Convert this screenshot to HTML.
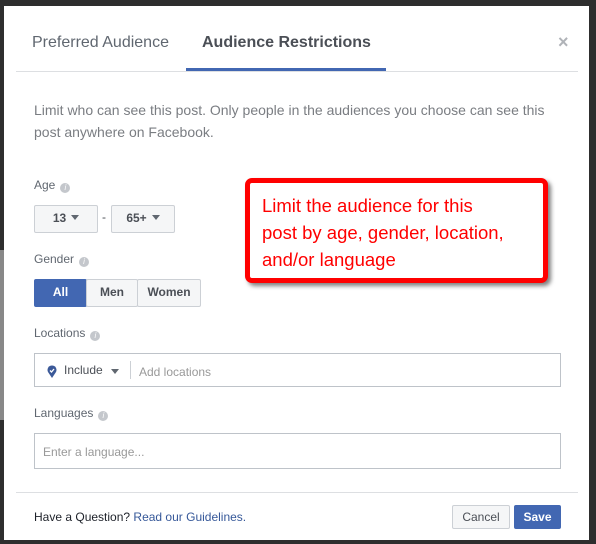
<!DOCTYPE html>
<html><head><style>
body{margin:0;width:596px;height:544px;background:#2e2e2e;position:relative;overflow:hidden;font-family:"Liberation Sans",Arial,sans-serif;}
.a{position:absolute}
.m{left:4px;top:6px;width:585px;height:534px;background:#fff;}
.lbl{font-size:12px;color:#606770;}
.i{display:inline-block;width:10px;height:10px;border-radius:50%;background:#c4c7cc;vertical-align:-1px;margin-left:5px;color:#fff;font-size:8px;text-align:center;line-height:10px;font-style:italic}
.dd{background:#f5f6f7;border:1px solid #ccd0d5;border-radius:2px;font-size:12px;font-weight:bold;color:#4b4f56;text-align:center;line-height:25px;box-sizing:border-box}
.car{display:inline-block;border-left:4px solid transparent;border-right:4px solid transparent;border-top:5px solid #606770;vertical-align:2px;margin-left:5px}
.inp{border:1px solid #bec3c9;box-sizing:border-box;font-size:12px;color:#999}
</style></head><body>
<div class="a" style="left:0;top:250px;width:4px;height:170px;background:#888"></div>
<div class="a m"></div>
<div class="a" style="left:32px;top:34px;font-size:16px;color:#606770">Preferred Audience</div>
<div class="a" style="left:202px;top:34px;font-size:16px;font-weight:bold;color:#4b4f56">Audience Restrictions</div>
<div class="a" style="left:558px;top:32px;font-size:18px;color:#b0b3b8;font-weight:bold">×</div>
<div class="a" style="left:16px;top:71px;width:562px;height:1px;background:#dddfe2"></div>
<div class="a" style="left:186px;top:68px;width:200px;height:3px;background:#4267b2"></div>
<div class="a" style="left:34px;top:99px;font-size:14px;line-height:22px;color:#7a7d82;white-space:nowrap">Limit who can see this post. Only people in the audiences you choose can see this<br>post anywhere on Facebook.</div>
<div class="a lbl" style="left:34px;top:178px">Age<span class="i">i</span></div>
<div class="a dd" style="left:34px;top:205px;width:64px;height:28px">13<span class="car"></span></div>
<div class="a" style="left:102px;top:210px;font-size:12px;color:#4b4f56">-</div>
<div class="a dd" style="left:111px;top:205px;width:64px;height:28px">65+<span class="car"></span></div>
<div class="a lbl" style="left:34px;top:252px">Gender<span class="i">i</span></div>
<div class="a dd" style="left:34px;top:279px;width:53px;height:28px;background:#4267b2;border-color:#4267b2;color:#fff">All</div>
<div class="a dd" style="left:86px;top:279px;width:52px;height:28px">Men</div>
<div class="a dd" style="left:137px;top:279px;width:64px;height:28px">Women</div>
<div class="a lbl" style="left:34px;top:326px">Locations<span class="i">i</span></div>
<div class="a inp" style="left:34px;top:353px;width:527px;height:34px">
<svg class="a" style="left:12px;top:11px" width="10" height="13" viewBox="0 0 10 13"><path d="M5 13L1 7A4.5 4.5 0 1 1 9 7Z" fill="#3b5998"/><path d="M3 5.5L4.5 7 7 4" stroke="#fff" stroke-width="1.3" fill="none"/></svg>
<span class="a" style="left:29px;top:9px;color:#4b4f56">Include</span>
<span class="a car" style="left:71px;top:15px"></span>
<span class="a" style="left:95px;top:7px;width:1px;height:18px;background:#ccd0d5"></span>
<span class="a" style="left:104px;top:11px">Add locations</span>
</div>
<div class="a lbl" style="left:34px;top:406px">Languages<span class="i">i</span></div>
<div class="a inp" style="left:34px;top:433px;width:527px;height:36px"><span class="a" style="left:8px;top:11px">Enter a language...</span></div>
<div class="a" style="left:16px;top:492px;width:562px;height:1px;background:#dddfe2"></div>
<div class="a" style="left:34px;top:510px;font-size:12px;color:#1d2129">Have a Question? <span style="color:#365899">Read our Guidelines.</span></div>
<div class="a dd" style="left:452px;top:505px;width:58px;height:24px;line-height:22px;font-weight:normal;color:#4b4f56">Cancel</div>
<div class="a dd" style="left:514px;top:505px;width:47px;height:24px;line-height:22px;background:#4267b2;border-color:#4267b2;color:#fff">Save</div>
<div class="a" style="left:245px;top:178px;width:303px;height:105px;box-sizing:border-box;border:5px solid #f00;border-radius:7px;background:#fff;box-shadow:3px 3px 4px rgba(0,0,0,.5)">
<div style="padding:9px 0 0 12px;font-size:18.5px;line-height:27px;color:#f00;white-space:nowrap">Limit the audience for this<br>post by age, gender, location,<br>and/or language</div></div>
</body></html>
